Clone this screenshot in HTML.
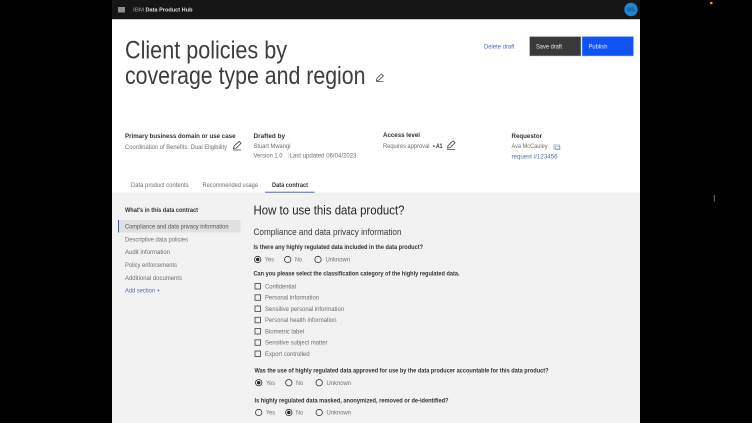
<!DOCTYPE html>
<html><head><meta charset="utf-8"><style>
html,body{margin:0;padding:0;background:#000;width:752px;height:423px;overflow:hidden}
svg{display:block;filter:blur(.3px)}
text{font-family:"Liberation Sans",sans-serif}
.t{font-size:6.2px;fill:#6f6f6f}
.b{font-size:6.2px;fill:#333;font-weight:bold}
.m{font-size:6.6px;fill:#333;font-weight:bold}
.l{fill:#4f6fae;font-size:6.2px}
.box{fill:none;stroke:#525252;stroke-width:.9}
.r{fill:none;stroke:#333;stroke-width:.8}
.p{fill:none;stroke:#444;stroke-width:.8}
</style></head><body>
<svg width="752" height="423" viewBox="0 0 752 423" xmlns="http://www.w3.org/2000/svg">
<rect width="752" height="423" fill="#000"/>
<rect x="112" y="0" width="528" height="423" fill="#fff"/>
<rect x="112" y="0" width="528" height="19" fill="#161616"/>
<rect x="112" y="19" width="528" height="1" fill="#c8c8c8"/>
<rect x="118" y="7" width="7" height="5.500" fill="#8d8d8d"/>
<text x="133" y="11.600" font-size="5.800" fill="#a8a8a8" textLength="11" lengthAdjust="spacingAndGlyphs">IBM</text>
<text x="145.500" y="11.600" font-size="5.800" fill="#e0e0e0" font-weight="bold" textLength="47" lengthAdjust="spacingAndGlyphs">Data Product Hub</text>
<circle cx="631" cy="9.500" r="6.700" fill="#1f86d0"/>
<text x="631" y="11.300" font-size="5" fill="#12466f" text-anchor="middle">MB</text>
<circle cx="711.300" cy="3" r="1.300" fill="#d9985f"/>
<rect x="713.800" y="195" width="1" height="6.500" fill="#777"/>

<text x="125" y="58.500" font-size="25" fill="#3d3d3d" textLength="162" lengthAdjust="spacingAndGlyphs">Client policies by</text>
<text x="125" y="84" font-size="25" fill="#3d3d3d" textLength="240.500" lengthAdjust="spacingAndGlyphs">coverage type and region</text>
<path class="p" d="M376 81.500h7.500M376.500 80.500l.5-2.200 4.500-4.300 1.900 1.800-4.500 4.300z"/>

<text x="484" y="48.500" class="l" font-size="6.200" textLength="30.500" lengthAdjust="spacingAndGlyphs">Delete draft</text>
<rect x="529.500" y="36.500" width="51.500" height="19.500" fill="#393939" stroke="#d0d0d0" stroke-width=".5"/>
<text x="536" y="48.700" font-size="6.200" fill="#e8e8e8" textLength="26" lengthAdjust="spacingAndGlyphs">Save draft</text>
<rect x="582" y="36.500" width="51.500" height="19.500" fill="#0f53f5" stroke="#a8c4f8" stroke-width=".5"/>
<text x="588.500" y="48.700" font-size="6.200" fill="#dfe8ff" textLength="19" lengthAdjust="spacingAndGlyphs">Publish</text>

<text x="125" y="137.800" class="m" textLength="110.500" lengthAdjust="spacingAndGlyphs">Primary business domain or use case</text>
<text x="125" y="149" class="t" textLength="102" lengthAdjust="spacingAndGlyphs">Coordination of Benefits: Dual Eligibility</text>
<path class="p" d="M233 150h8M233.500 148.500l.6-2.400 5-4.800 2 2-5 4.800z"/>
<text x="253.500" y="137.800" class="m" textLength="31.500" lengthAdjust="spacingAndGlyphs">Drafted by</text>
<text x="253.500" y="148" class="t" textLength="37" lengthAdjust="spacingAndGlyphs">Stuart Mwangi</text>
<text x="253.500" y="157.700" class="t" textLength="29" lengthAdjust="spacingAndGlyphs">Version 1.0</text>
<rect x="288" y="152.500" width=".5" height="6" fill="#ccc"/>
<text x="289.500" y="157.700" class="t" textLength="67" lengthAdjust="spacingAndGlyphs">Last updated 06/04/2023</text>
<text x="383" y="136.800" class="m" textLength="37" lengthAdjust="spacingAndGlyphs">Access level</text>
<text x="383" y="148" class="t" textLength="46.500" lengthAdjust="spacingAndGlyphs">Requires approval</text>
<text x="433" y="148" font-size="6" fill="#333" textLength="9.500" font-weight="bold" lengthAdjust="spacingAndGlyphs">• A1</text>
<path class="p" d="M447 149.500h8M447.500 148l.6-2.400 5-4.800 2 2-5 4.800z"/>
<text x="511.500" y="137.800" class="m" textLength="30.500" lengthAdjust="spacingAndGlyphs">Requestor</text>
<text x="511.500" y="148" class="t" textLength="36" lengthAdjust="spacingAndGlyphs">Ava McCauley</text>
<rect x="554" y="145" width="5.500" height="4" fill="none" stroke="#8fa6cf" stroke-width=".8"/>
<rect x="555.500" y="146.300" width="4.500" height="3.500" fill="none" stroke="#8fa6cf" stroke-width=".6"/>
<text x="511.500" y="158.500" class="l" textLength="46" lengthAdjust="spacingAndGlyphs">request #123456</text>

<text x="131" y="187" class="t" textLength="57.500" lengthAdjust="spacingAndGlyphs">Data product contents</text>
<text x="202.500" y="187" class="t" textLength="55.500" lengthAdjust="spacingAndGlyphs">Recommended usage</text>
<text x="272" y="187" class="b" textLength="36" lengthAdjust="spacingAndGlyphs">Data contract</text>

<rect x="112" y="192.500" width="528" height="230.500" fill="#f2f2f2"/>
<rect x="265" y="191.700" width="49.500" height="1.100" fill="#6a78a8"/>

<text x="125" y="212" class="b" textLength="73" lengthAdjust="spacingAndGlyphs">What's in this data contract</text>
<rect x="118" y="220" width="122.500" height="12.500" fill="#e0e0e0"/>
<rect x="118" y="220" width="1" height="12.500" fill="#4a5f95"/>
<text x="125" y="228.300" font-size="6.200" fill="#525252" textLength="103.500" lengthAdjust="spacingAndGlyphs">Compliance and data privacy information</text>
<text x="125" y="241.300" class="t" textLength="63" lengthAdjust="spacingAndGlyphs">Descriptive data policies</text>
<text x="125" y="254" class="t" textLength="45" lengthAdjust="spacingAndGlyphs">Audit information</text>
<text x="125" y="267" class="t" textLength="52" lengthAdjust="spacingAndGlyphs">Policy enforcements</text>
<text x="125" y="280" class="t" textLength="57" lengthAdjust="spacingAndGlyphs">Additional documents</text>
<text x="125" y="292.500" class="l" textLength="35" lengthAdjust="spacingAndGlyphs">Add section +</text>

<text x="253.500" y="214.500" font-size="12.500" fill="#262626" textLength="151" lengthAdjust="spacingAndGlyphs">How to use this data product?</text>
<text x="253.500" y="235" font-size="9" fill="#393939" textLength="148" lengthAdjust="spacingAndGlyphs">Compliance and data privacy information</text>

<text x="253.500" y="249" class="b" textLength="169.500" lengthAdjust="spacingAndGlyphs">Is there any highly regulated data included in the data product?</text>
<circle class="r" cx="257.700" cy="259.500" r="3.200"/><circle cx="257.700" cy="259.500" r="1.700" fill="#222"/>
<text x="265" y="261.500" class="t" textLength="9" lengthAdjust="spacingAndGlyphs">Yes</text>
<circle class="r" cx="287.700" cy="259.500" r="3.200"/>
<text x="295" y="261.500" class="t" textLength="7" lengthAdjust="spacingAndGlyphs">No</text>
<circle class="r" cx="318" cy="259.500" r="3.200"/>
<text x="325.500" y="261.500" class="t" textLength="24.500" lengthAdjust="spacingAndGlyphs">Unknown</text>

<text x="253.500" y="275.500" class="b" textLength="206" lengthAdjust="spacingAndGlyphs">Can you please select the classification category of the highly regulated data.</text>

<rect class="box" x="255" y="283.500" width="5.500" height="5.500"/>
<text x="265" y="288.300" class="t" textLength="31" lengthAdjust="spacingAndGlyphs">Confidential</text>
<rect class="box" x="255" y="294.800" width="5.500" height="5.500"/>
<text x="265" y="299.600" class="t" textLength="54" lengthAdjust="spacingAndGlyphs">Personal information</text>
<rect class="box" x="255" y="306" width="5.500" height="5.500"/>
<text x="265" y="310.800" class="t" textLength="79" lengthAdjust="spacingAndGlyphs">Sensitive personal information</text>
<rect class="box" x="255" y="317.300" width="5.500" height="5.500"/>
<text x="265" y="322.100" class="t" textLength="71.500" lengthAdjust="spacingAndGlyphs">Personal health information</text>
<rect class="box" x="255" y="328.500" width="5.500" height="5.500"/>
<text x="265" y="333.300" class="t" textLength="39" lengthAdjust="spacingAndGlyphs">Biometric label</text>
<rect class="box" x="255" y="339.800" width="5.500" height="5.500"/>
<text x="265" y="344.600" class="t" textLength="62.500" lengthAdjust="spacingAndGlyphs">Sensitive subject matter</text>
<rect class="box" x="255" y="351" width="5.500" height="5.500"/>
<text x="265" y="355.800" class="t" textLength="44.500" lengthAdjust="spacingAndGlyphs">Export controlled</text>

<text x="254.500" y="372.500" class="b" textLength="294" lengthAdjust="spacingAndGlyphs">Was the use of highly regulated data approved for use by the data producer accountable for this data product?</text>
<circle class="r" cx="258.700" cy="382.700" r="3.200"/><circle cx="258.700" cy="382.700" r="1.700" fill="#222"/>
<text x="266" y="384.800" class="t" textLength="9" lengthAdjust="spacingAndGlyphs">Yes</text>
<circle class="r" cx="288.800" cy="382.700" r="3.200"/>
<text x="296" y="384.800" class="t" textLength="7" lengthAdjust="spacingAndGlyphs">No</text>
<circle class="r" cx="319.200" cy="382.700" r="3.200"/>
<text x="326.500" y="384.800" class="t" textLength="24.500" lengthAdjust="spacingAndGlyphs">Unknown</text>

<text x="254.500" y="402.500" class="b" textLength="194" lengthAdjust="spacingAndGlyphs">Is highly regulated data masked, anonymized, removed or de-identified?</text>
<circle class="r" cx="258.700" cy="412.500" r="3.200"/>
<text x="266" y="414.500" class="t" textLength="9" lengthAdjust="spacingAndGlyphs">Yes</text>
<circle class="r" cx="288.800" cy="412.500" r="3.200"/><circle cx="288.800" cy="412.500" r="1.700" fill="#222"/>
<text x="296" y="414.500" class="t" textLength="7" lengthAdjust="spacingAndGlyphs">No</text>
<circle class="r" cx="319.200" cy="412.500" r="3.200"/>
<text x="326.500" y="414.500" class="t" textLength="24.500" lengthAdjust="spacingAndGlyphs">Unknown</text>
</svg>
</body></html>
